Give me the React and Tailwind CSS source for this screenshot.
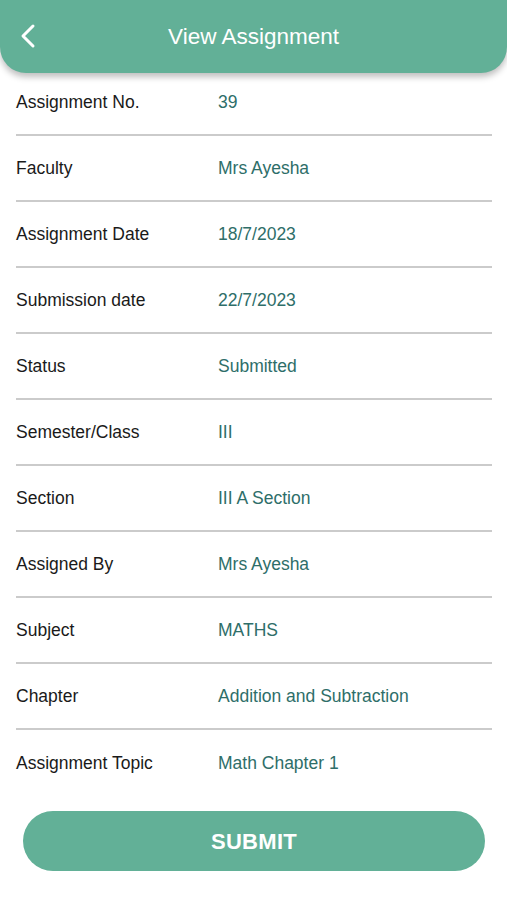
const rows = [
    ["Assignment No.", "39"],
    ["Faculty", "Mrs Ayesha"],
    ["Assignment Date", "18/7/2023"],
    ["Submission date", "22/7/2023"],
    ["Status", "Submitted"],
    ["Semester/Class", "III"],
    ["Section", "III A Section"],
    ["Assigned By", "Mrs Ayesha"],
    ["Subject", "MATHS"],
    ["Chapter", "Addition and Subtraction"],
    ["Assignment Topic", "Math Chapter 1"],
]

const App = () => {
    return (
        <div className="w-[507px] h-[900px] bg-white font-['Liberation_Sans',Arial,sans-serif] overflow-hidden">
            <header className="relative z-10 h-[73px] bg-[#62b097] rounded-b-[26px] shadow-[0_4px_6px_rgba(0,0,0,0.25)] flex items-center justify-center">
                <svg className="absolute left-[18px] top-[23px]" width="20" height="26" viewBox="0 0 20 26" fill="none">
                    <path d="M15 3L5 13l10 10" stroke="white" strokeWidth="3" strokeLinecap="round" strokeLinejoin="round" />
                </svg>
                <h1 className="text-white text-[22.5px]">View Assignment</h1>
            </header>
            <div className="-mt-[3px] pl-[16px] pr-[15px]">
                {rows.map(([label, value], i) => (
                    <div
                        key={label}
                        className={`flex items-center h-[66px] ${i < rows.length - 1 ? "border-b-2 border-[#cbcbcb]" : ""}`}
                    >
                        <span className="w-[202px] text-[17.5px] text-[#1a1a1a]">{label}</span>
                        <span className="text-[17.5px] text-[#2e6e69]">{value}</span>
                    </div>
                ))}
            </div>
            <div className="px-[23px] pt-[15px]">
                <button className="w-[462px] h-[60px] rounded-full bg-[#62b097] text-white text-[22px] font-bold tracking-[0.3px]">
                    SUBMIT
                </button>
            </div>
        </div>
    )
}

export default App;
